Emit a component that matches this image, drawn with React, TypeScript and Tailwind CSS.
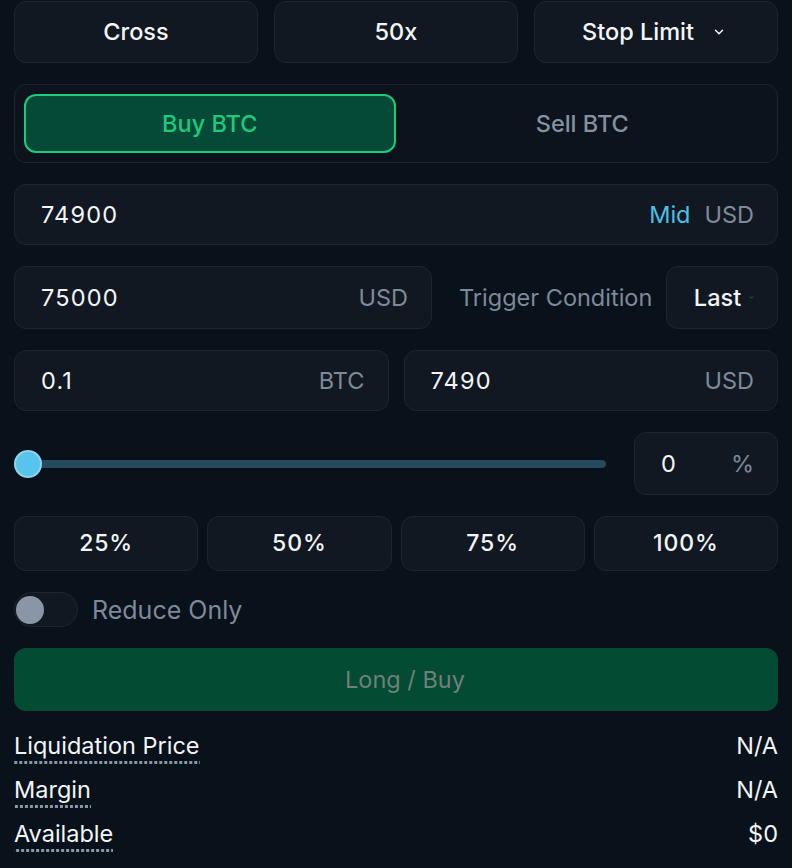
import { useState } from "react";

function Chevron({ className }: { className?: string }) {
  return (
    <svg viewBox="0 0 24 24" fill="none" stroke="currentColor" strokeWidth={2.5} strokeLinecap="round" strokeLinejoin="round" className={className}>
      <path d="m6 9 6 6 6-6" />
    </svg>
  );
}

function Field({ value, suffix, className = "" }: { value: string; suffix?: React.ReactNode; className?: string }) {
  return (
    <div className={`flex h-[61px] items-center justify-between rounded-[12px] border border-[#1d252f] bg-[#111821] pl-[26px] pr-[23px] ${className}`}>
      <span className="text-[23.5px] tracking-[0.05em] text-[#f3f5f7]">{value}</span>
      {suffix}
    </div>
  );
}

const Unit = ({ children }: { children: React.ReactNode }) => (
  <span className="text-[23.5px] text-[#7d8a99]">{children}</span>
);

export default function App() {
  const [side, setSide] = useState<"buy" | "sell">("buy");

  const info = [
    ["Liquidation Price", "N/A"],
    ["Margin", "N/A"],
    ["Available", "$0"],
  ];

  return (
    <div className="min-h-[868px] bg-[#09111b] px-[14px] pt-px font-['Inter',sans-serif] text-white">
      <div className="flex flex-col gap-[21px]">
        <div className="grid grid-cols-3 gap-4">
          {["Cross", "50x"].map((t) => (
            <button key={t} className="flex h-[62px] items-center justify-center rounded-[12px] border border-[#1d252f] bg-[#111821] text-[23.5px] font-medium text-[#f3f5f7]">
              {t}
            </button>
          ))}
          <button className="flex h-[62px] items-center justify-center gap-[18px] rounded-[12px] border border-[#1d252f] bg-[#111821] pr-[4px] text-[23.5px] font-medium text-[#f3f5f7]">
            Stop Limit
            <Chevron className="h-[14px] w-[14px]" />
          </button>
        </div>

        <div className="grid h-[79px] grid-cols-2 gap-px rounded-[12px] border border-[#1d252f] bg-[#0c131c] p-[9px]">
          <button
            onClick={() => setSide("buy")}
            className={`rounded-[12px] border-2 text-[23.5px] font-medium ${side === "buy" ? "border-[#1ec97d] bg-[#054a37] text-[#1ec97d]" : "border-transparent text-[#8391a1]"}`}
          >
            Buy BTC
          </button>
          <button
            onClick={() => setSide("sell")}
            className={`rounded-[12px] border-2 text-[23.5px] font-medium ${side === "sell" ? "border-[#e0475d] bg-[#4a1420] text-[#f0566b]" : "border-transparent text-[#8391a1]"}`}
          >
            Sell BTC
          </button>
        </div>

        <Field
          value="74900"
          suffix={
            <span className="flex gap-[14px]">
              <span className="text-[23.5px] text-[#4cc0ea]">Mid</span>
              <Unit>USD</Unit>
            </span>
          }
        />

        <div className="flex h-[63px] items-center">
          <Field value="75000" suffix={<Unit>USD</Unit>} className="h-[63px] w-[418px]" />
          <span className="ml-[27px] text-[23.5px] text-[#7d8a99]">Trigger Condition</span>
          <button className="ml-auto flex h-[63px] w-[112px] items-center justify-center gap-[8px] rounded-[12px] border border-[#1d252f] bg-[#111821] pl-[4px] text-[23.5px] font-medium text-[#f3f5f7]">
            Last
            <Chevron className="h-[5px] w-[5px] text-[#7d8a99]" />
          </button>
        </div>

        <div className="flex gap-[15px]">
          <Field value="0.1" suffix={<Unit>BTC</Unit>} className="flex-1" />
          <Field value="7490" suffix={<Unit>USD</Unit>} className="flex-1" />
        </div>

        <div className="flex h-[63px] items-center">
          <div className="relative h-[8px] w-[592px] rounded-full bg-[#244a5c]">
            <div className="absolute left-0 top-1/2 h-[28px] w-[28px] -translate-y-1/2 rounded-full border-2 border-[#8fd3ee] bg-[#58c3eb]" />
          </div>
          <div className="ml-auto flex h-[63px] w-[144px] items-center justify-between rounded-[12px] border border-[#1d252f] bg-[#111821] pl-[26px] pr-[23px]">
            <span className="text-[23.5px] text-[#f3f5f7]">0</span>
            <Unit>%</Unit>
          </div>
        </div>

        <div className="grid grid-cols-4 gap-[9px]">
          {["25%", "50%", "75%", "100%"].map((p) => (
            <button key={p} className="h-[55px] rounded-[12px] border border-[#1d252f] bg-[#111821] text-[23px] font-medium tracking-[0.04em] text-[#f3f5f7]">
              {p}
            </button>
          ))}
        </div>

        <div className="flex h-[35px] items-center gap-[14px]">
          <div className="flex h-[35px] w-[64px] items-center rounded-full border border-[#1d252f] bg-[#111821] px-[1px]">
            <div className="h-[28px] w-[28px] rounded-full bg-[#8a96a6]" />
          </div>
          <span className="pt-[3px] text-[25px] text-[#7d8a99]">Reduce Only</span>
        </div>

        <button className="h-[63px] rounded-[12px] bg-[#034b33] pl-[18px] text-[23.5px] text-[#6e807b]">Long / Buy</button>
      </div>

      <div className="mt-[13px] flex flex-col">
        {info.map(([label, value]) => (
          <div key={label} className="flex h-[44px] items-center justify-between">
            <span className="bg-[linear-gradient(to_right,#8a96a6_60%,transparent_0)] bg-[length:5px_3px] bg-bottom bg-repeat-x pb-[5px] pt-[4px] text-[23.5px] leading-[26px] text-[#f3f5f7]">
              {label}
            </span>
            <span className="text-[23.5px] text-[#f3f5f7]">{value}</span>
          </div>
        ))}
      </div>
    </div>
  );
}
